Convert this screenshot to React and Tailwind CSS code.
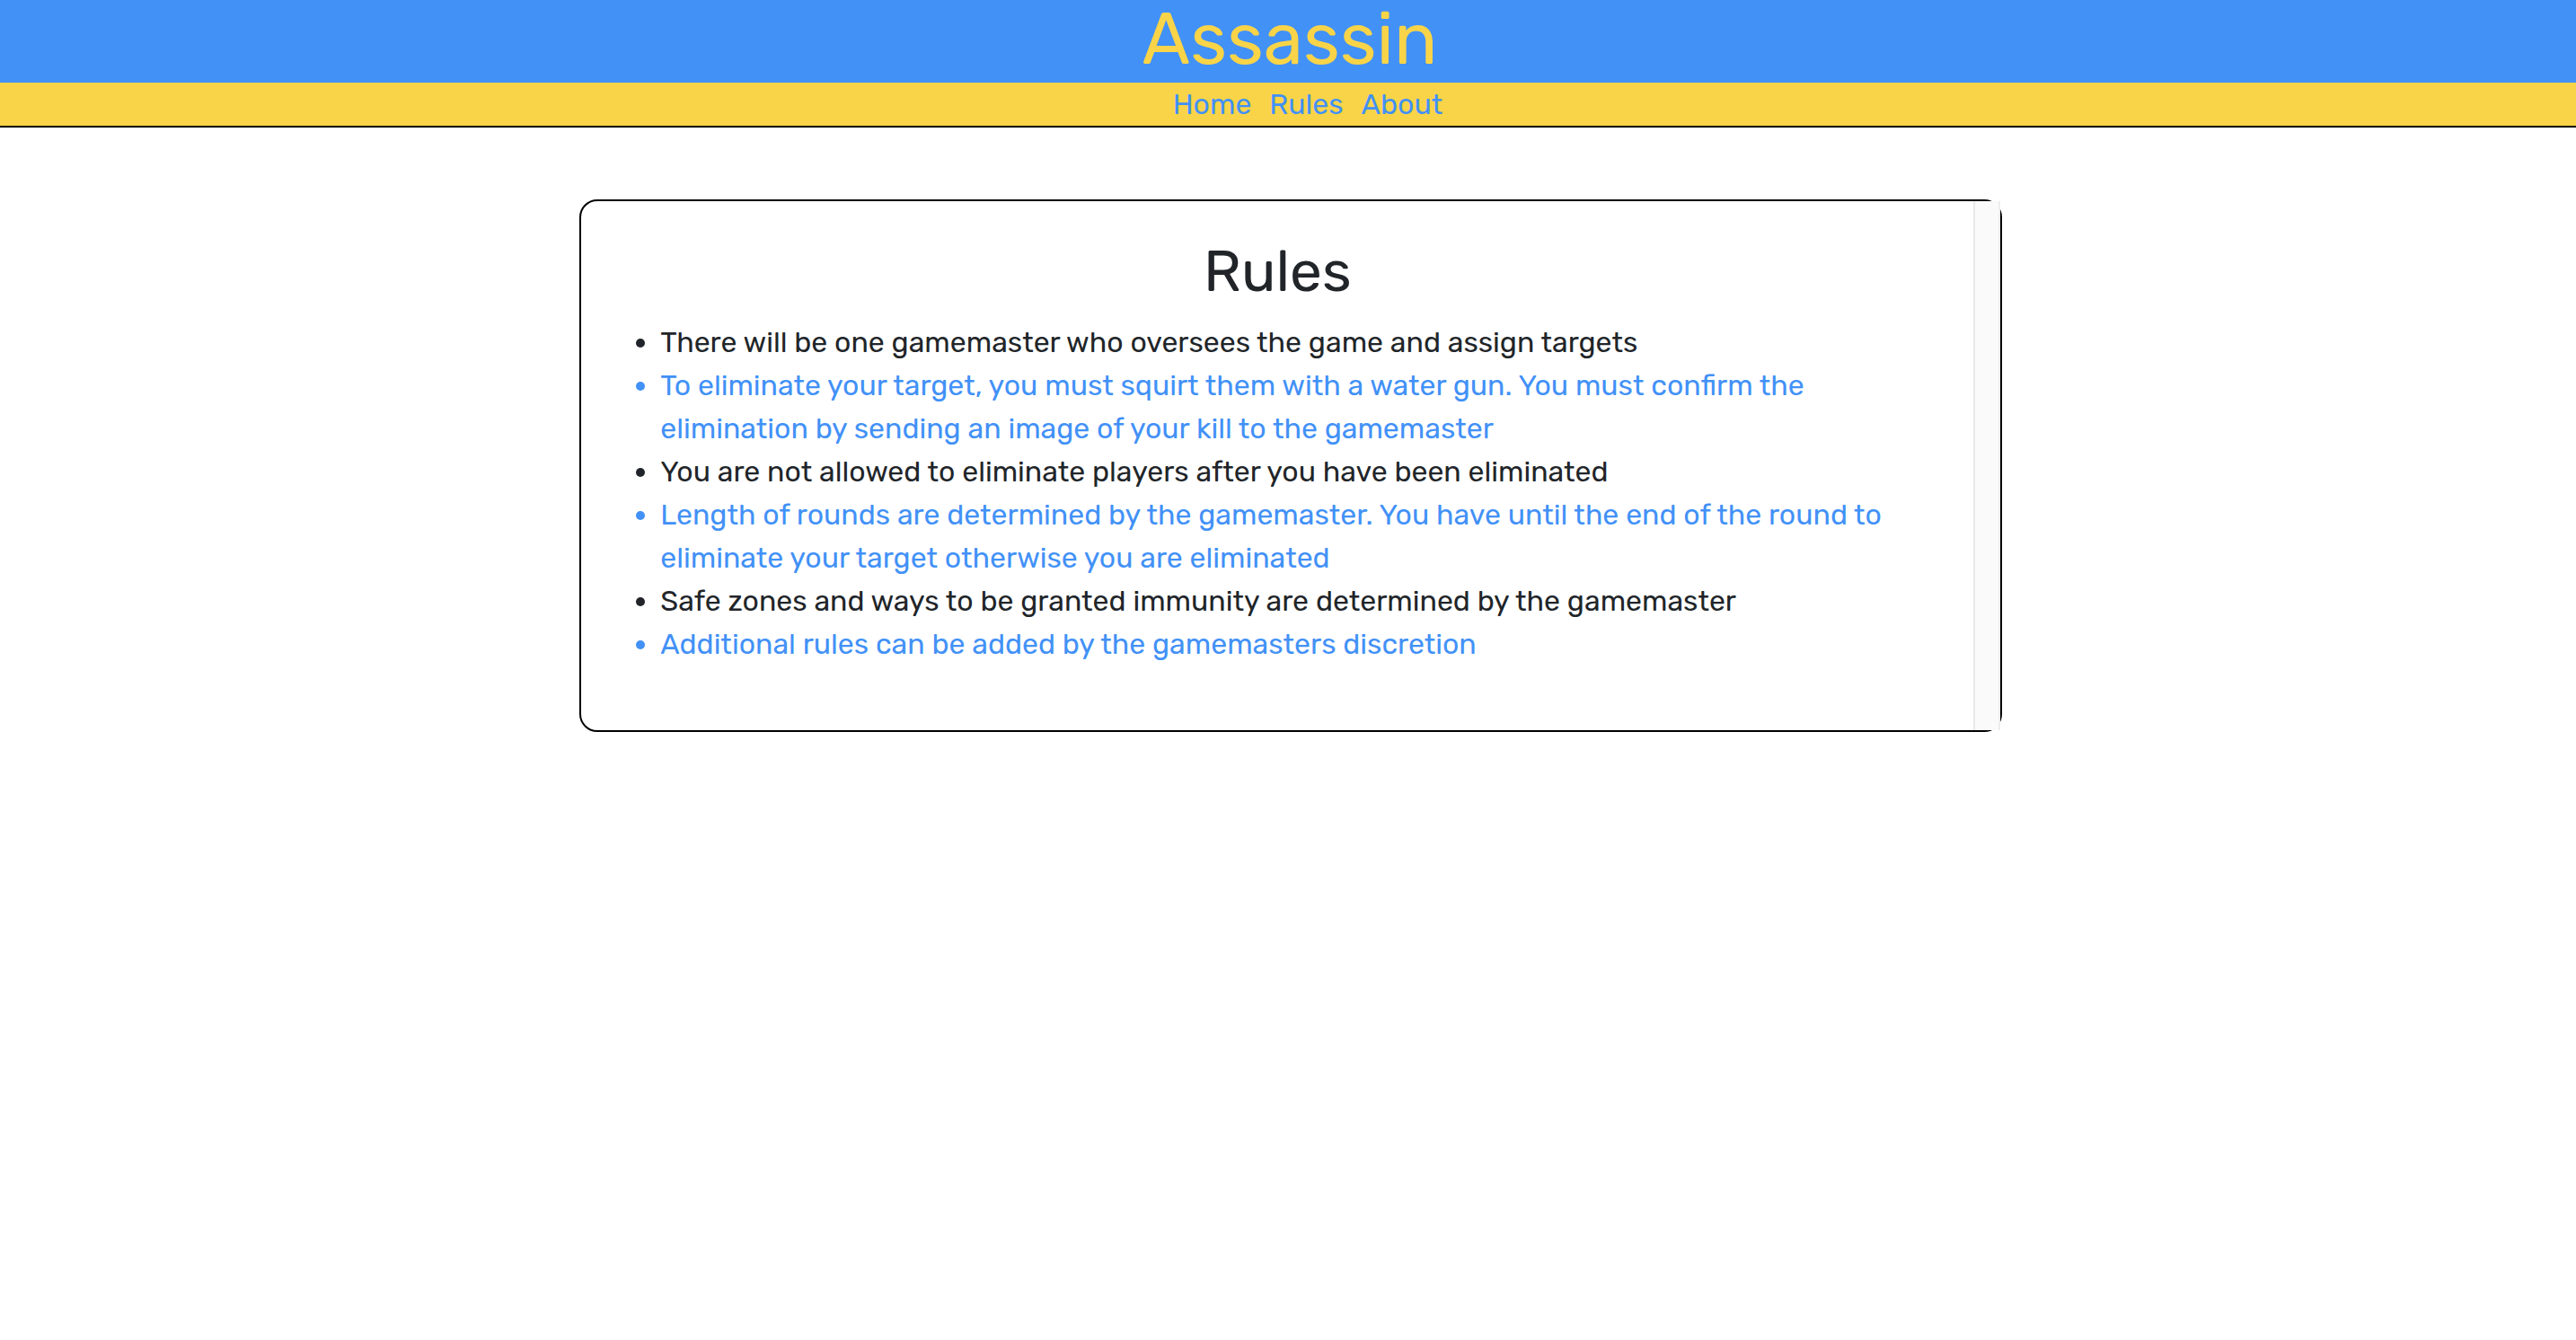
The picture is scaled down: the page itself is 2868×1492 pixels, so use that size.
const links = ["Home", "Rules", "About"];

const rules = [
  "There will be one gamemaster who oversees the game and assign targets",
  "To eliminate your target, you must squirt them with a water gun. You must confirm the elimination by sending an image of your kill to the gamemaster",
  "You are not allowed to eliminate players after you have been eliminated",
  "Length of rounds are determined by the gamemaster. You have until the end of the round to eliminate your target otherwise you are eliminated",
  "Safe zones and ways to be granted immunity are determined by the gamemaster",
  "Additional rules can be added by the gamemasters discretion",
];

function Header() {
  return (
    <header className="border-b-2 border-black">
      <h1 className="bg-[#4291f7] pb-1 pl-1 text-center text-[80px] leading-[88px] text-[#f9d448]">
        Assassin
      </h1>
      <nav className="bg-[#f9d448] pl-11">
        <ul className="flex justify-center gap-5">
          {links.map((label) => (
            <li key={label}>
              <a href={`#${label.toLowerCase()}`} className="block text-[#4291f7]">
                {label}
              </a>
            </li>
          ))}
        </ul>
      </nav>
    </header>
  );
}

function RulesCard() {
  return (
    <section className="mt-20 ml-[22.5%] flex w-[55.23%] rounded-[20px] border-2 border-black">
      <div className="flex-1 px-6 pt-10 pb-[72px]">
        <h2 className="mb-4 text-center text-[64px] leading-[77px]">Rules</h2>
        <ul className="list-disc pl-16">
          {rules.map((rule) => (
            <li key={rule} className="even:text-[#4291f7]">
              {rule}
            </li>
          ))}
        </ul>
      </div>
      <div className="w-[30px] shrink-0 border-x-2 border-l-[#e8e8e8] border-r-[#ededed] bg-[#fafafa]" />
    </section>
  );
}

export default function App() {
  return (
    <div className="min-h-screen bg-white font-[Rubik,Inter,sans-serif] text-[32px] leading-[48px] text-[#212529]">
      <Header />
      <main>
        <RulesCard />
      </main>
    </div>
  );
}
